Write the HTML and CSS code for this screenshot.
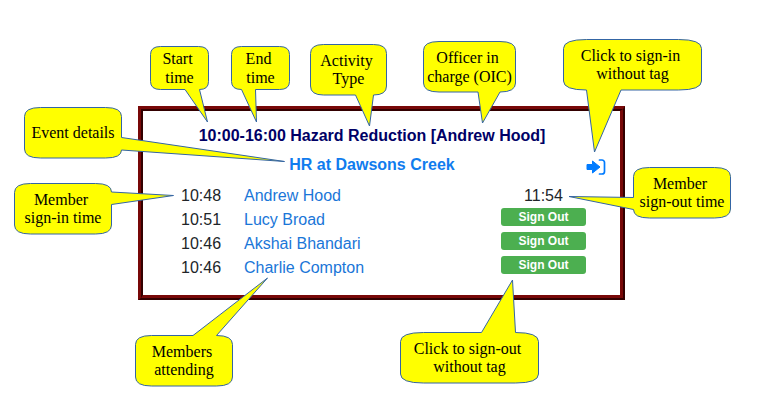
FILE: index.html
```html
<!DOCTYPE html>
<html lang="en">
<head>
<meta charset="utf-8">
<title>Activity sign-in guide</title>
<link rel="stylesheet" href="styles.css">
</head>
<body>
<main class="guide">
  <div class="frame">
  <section class="panel">
    <h1 class="panel-title">10:00-16:00 Hazard Reduction [Andrew Hood]</h1>
    <h2 class="panel-event"><a href="#event">HR at Dawsons Creek</a></h2>
    <a class="sign-in" href="#sign-in" aria-label="Sign in without tag">
      <svg width="20" height="16" viewBox="0 0 20 16" aria-hidden="true">
        <path fill="#007bff" stroke="#007bff" stroke-linejoin="round" d="M1 5.500h5.500V2L14 8l-7.500 6v-3.500H1z"/>
        <path fill="none" stroke="#007bff" stroke-width="1.700" stroke-linecap="round" d="M13.500 1H16a2.500 2.500 0 0 1 2.500 2.500v9A2.500 2.500 0 0 1 16 15h-2.500"/>
      </svg>
    </a>
    <table class="members">
      <tbody>
        <tr><td class="time-in">10:48</td><td><a href="#m1">Andrew Hood</a></td><td class="out">11:54</td></tr>
        <tr><td class="time-in">10:51</td><td><a href="#m2">Lucy Broad</a></td><td class="out"><button type="button">Sign Out</button></td></tr>
        <tr><td class="time-in">10:46</td><td><a href="#m3">Akshai Bhandari</a></td><td class="out"><button type="button">Sign Out</button></td></tr>
        <tr><td class="time-in">10:46</td><td><a href="#m4">Charlie Compton</a></td><td class="out"><button type="button">Sign Out</button></td></tr>
      </tbody>
    </table>
  </section>
  </div>

  <div class="callout small start">
    <svg aria-hidden="true"><path d="M10.500.5H48.500Q58.500.5 58.500 8.500V35.500Q58.500 43.500 49.500 43.500L57.500 76 35 43.500H10.500Q.5 43.500.5 35.500V8.500Q.5.5 10.500.5z"/></svg>
    <p>Start 
time</p>
  </div>
  <div class="callout small end">
    <svg aria-hidden="true"><path d="M10.500.5H48.500Q58.500.5 58.500 8.500V35.500Q58.500 43.500 48.500 43.500H24.500L25.500 76 10.500 43.500Q.5 43.500.5 35.500V8.500Q.5.5 10.500.5z"/></svg>
    <p>End 
time</p>
  </div>
  <div class="callout activity">
    <svg aria-hidden="true"><path d="M13.500.5H63.500Q76.500.5 76.500 9.500V42Q76.500 51 63.500 51L59.500 82 45.500 51H13.500Q.5 51 .5 42V9.500Q.5.5 13.500.5z"/></svg>
    <p>Activity 
Type</p>
  </div>
  <div class="callout officer">
    <svg aria-hidden="true"><path d="M16 .5H77Q92.500.5 92.500 9.500V42Q92.500 51 77 51L59.500 82 55 51H16Q.5 51 .5 42V9.500Q.5.5 16 .5z"/></svg>
    <p>Officer in 
charge (OIC)</p>
  </div>
  <div class="callout wide click-in">
    <svg aria-hidden="true"><path d="M23.500.5H115.500Q138.500.5 138.500 9.500V42Q138.500 51 115.500 51H58L31.500 113 23.500 51Q.5 51 .5 42V9.500Q.5.5 23.500.5z"/></svg>
    <p>Click to sign-in 
without tag</p>
  </div>
  <div class="callout event">
    <svg aria-hidden="true"><path d="M16.500.5H81.500Q97.500.5 97.500 9.500V30.500L260.500 54.500 97.500 43Q97.500 51 81.500 51H16.500Q.5 51 .5 42V9.500Q.5.5 16.500.5z"/></svg>
    <p>Event details</p>
  </div>
  <div class="callout member-in">
    <svg aria-hidden="true"><path d="M16.500.5H81.500Q97.500.5 97.500 9L159.500 12.500 97.500 21.500V42Q97.500 51 81.500 51H16.500Q.5 51 .5 42V9.500Q.5.5 16.500.5z"/></svg>
    <p>Member 
sign-in time</p>
  </div>
  <div class="callout member-out">
    <svg aria-hidden="true"><path d="M16.500.5H81.500Q97.500.5 97.500 9.500V42Q97.500 51 81.500 51H16.500Q.5 51 .5 42.500L-64 29.500.5 30.500V9.500Q.5.5 16.500.5z"/></svg>
    <p>Member 
sign-out time</p>
  </div>
  <div class="callout members-note">
    <svg aria-hidden="true"><path d="M16.500.5H58L132.500-57 81.500.5Q97.500.5 97.500 9.500V42Q97.500 51 81.500 51H16.500Q.5 51 .5 42V9.500Q.5.5 16.500.5z"/></svg>
    <p>Members 
attending</p>
  </div>
  <div class="callout wide click-out">
    <svg aria-hidden="true"><path d="M23.500.5H81.500L112.500-52 115.500.5Q138.500.5 138.500 9.500V42Q138.500 51 115.500 51H23.500Q.5 51 .5 42V9.500Q.5.5 23.500.5z"/></svg>
    <p>Click to sign-out 
without tag</p>
  </div>
</main>
</body>
</html>
```

FILE: styles.css
```css
* { box-sizing: border-box; }

body {
  margin: 0;
  background: #fff;
  color: #212529;
  font: 16px/24px "Liberation Sans", Arial, sans-serif;
}

a { color: #1a76d8; text-decoration: none; }

.guide {
  position: relative;
  padding: 106px 142px 111px 138px;
}

/* Two nested borders give the raised maroon edge. */
.frame {
  border: solid;
  border-width: 3px 2px 2px 3px;
  border-color: #780808 #330000 #330000 #780808;
}

.panel {
  display: grid;
  grid-template-columns: 1fr 20px;
  align-items: center;
  padding: 13px 14px 15px 15px;
  border: solid;
  border-width: 2px 3px 3px 2px;
  border-color: #330000 #780808 #780808 #330000;
}

.panel-title,
.panel-event {
  grid-column: 1;
  margin: 0;
  font-size: 16px;
  text-align: center;
}

.panel-title { color: #000066; }
.panel-event { margin-top: 5px; }
.panel-event a { color: #107cee; }

.sign-in {
  display: flex;
  margin-top: 8px;
}

.members {
  grid-column: 1;
  width: 100%;
  margin-top: 7px;
  padding-left: 23px;
  border-spacing: 0;
}

.members td { height: 24px; padding: 0; }
.members .time-in { width: 63px; }
.members .out { width: 85px; text-align: center; }

.members button {
  display: block;
  width: 100%;
  height: 18px;
  margin-bottom: 6px;
  padding: 0;
  border: 0;
  border-radius: 3px;
  background: #4caf50;
  color: #fff;
  font: bold 12px/18px "Liberation Sans", Arial, sans-serif;
}

.callout {
  position: absolute;
  display: flex;
  align-items: center;
  justify-content: center;
  width: 98px;
  height: 52px;
  color: #000;
  font: 16px/18px "Liberation Serif", "Times New Roman", serif;
}

.callout svg {
  position: absolute;
  inset: 0;
  width: 100%;
  height: 100%;
  overflow: visible;
  fill: #ff0;
  stroke: #3465a4;
}

.callout p {
  position: relative;
  margin: 0;
  text-align: center;
  white-space: pre;
}

.callout.small { width: 59px; height: 44px; line-height: 19px; }
.callout.wide { width: 139px; }

.start { top: 46px; left: 150px; }
.end { top: 46px; left: 231px; }
.callout.activity { top: 44px; left: 310px; width: 77px; }
.callout.officer { top: 41px; left: 423px; width: 93px; line-height: 19px; }
.click-in { top: 39px; right: 65px; }
.event { top: 107px; left: 24px; }
.member-in { top: 183px; left: 14px; }
.member-out { top: 167px; right: 36px; }
.members-note { top: 335px; left: 135px; }
.click-out { top: 332px; left: 400px; }
```
